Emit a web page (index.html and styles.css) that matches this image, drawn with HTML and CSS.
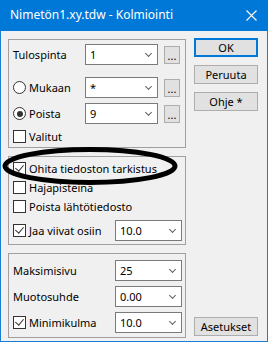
FILE: index.html
```html
<!DOCTYPE html>
<html lang="fi">
<head>
    <meta charset="UTF-8">
    <title>Kolmiointi</title>
    <link rel="stylesheet" href="styles.css">
</head>
<body>
    <div class="window">
        <div class="titlebar">
            <span class="title">Nimetön1.xy.tdw - Kolmiointi</span>
            <svg class="close" width="11" height="11" viewBox="0 0 11 11">
                <path d="M0.5 0.5 L10.5 10.5 M10.5 0.5 L0.5 10.5" stroke="#fff" stroke-width="1.1" fill="none"/>
            </svg>
        </div>

        <div class="client">
            <div class="groups">
                <!-- Tulospinta / lähde -->
                <div class="group g1">
                    <div class="row first">
                        <span class="lbl">Tulospinta</span>
                        <div class="combo">1<i class="chev"></i></div>
                        <button class="dots">...</button>
                    </div>
                    <div class="row gap12">
                        <span class="lbl"><span class="radio"></span>Mukaan</span>
                        <div class="combo">*<i class="chev"></i></div>
                        <button class="dots">...</button>
                    </div>
                    <div class="row">
                        <span class="lbl"><span class="radio on"></span>Poista</span>
                        <div class="combo">9<i class="chev"></i></div>
                        <button class="dots">...</button>
                    </div>
                    <div class="check-row">
                        <span class="check"></span>Valitut
                    </div>
                </div>

                <!-- Tiedostot -->
                <div class="group g2">
                    <div class="check-row first"><span class="check on"></span>Ohita tiedoston tarkistus</div>
                    <div class="check-row"><span class="check"></span>Hajapisteinä</div>
                    <div class="check-row"><span class="check"></span>Poista lähtötiedosto</div>
                    <div class="row wide last">
                        <span class="lbl"><span class="check on"></span>Jaa viivat osiin</span>
                        <div class="combo">10.0<i class="chev"></i></div>
                    </div>
                </div>

                <!-- Kolmiot -->
                <div class="group g3">
                    <div class="row wide first">
                        <span class="lbl">Maksimisivu</span>
                        <div class="combo">25<i class="chev"></i></div>
                    </div>
                    <div class="row wide">
                        <span class="lbl">Muotosuhde</span>
                        <div class="combo">0.00<i class="chev"></i></div>
                    </div>
                    <div class="row wide">
                        <span class="lbl"><span class="check on"></span>Minimikulma</span>
                        <div class="combo">10.0<i class="chev"></i></div>
                    </div>
                </div>
            </div>

            <div class="buttons">
                <button class="btn default">OK</button>
                <button class="btn">Peruuta</button>
                <button class="btn">Ohje *</button>
                <button class="btn bottom">Asetukset</button>
            </div>

            <!-- käsin piirretty korostus -->
            <svg class="mark" width="190" height="50" viewBox="0 0 190 50">
                <ellipse cx="88" cy="24" rx="85" ry="16.5" fill="none" stroke="#000" stroke-width="5"/>
            </svg>
        </div>
    </div>
</body>
</html>
```

FILE: styles.css
```css
body {
    margin: 0;
    font-family: 'Noto Sans', 'Open Sans', sans-serif;
    font-size: 11px;
    color: #000;
}

.window {
    width: 268px;
    height: 342px;
    box-sizing: border-box;
    border: 1px solid #1a7fd4;
    border-top: none;
    background-color: #f0f0f0;
    display: flex;
    flex-direction: column;
}

.titlebar {
    height: 31px;
    margin: 0 -1px;
    background-color: #0078d7;
    color: #fff;
    display: flex;
    align-items: center;
    padding: 0 11px 0 10px;
    flex-shrink: 0;
}

.title {
    flex: 1;
    font-size: 12px;
    line-height: 14px;
    margin-top: -1px;
}

.close {
    display: block;
    margin-top: -1px;
}

.client {
    flex: 1;
    display: flex;
    padding: 8px 0 3px 7px;
    position: relative;
}

.groups {
    width: 178px;
    display: flex;
    flex-direction: column;
    gap: 8px;
}

.group {
    box-sizing: border-box;
    border: 1px solid #a0a0a0;
    padding: 0 3px 0 4px;
    display: flex;
    flex-direction: column;
}

.g1 { height: 109px; }
.g2 { height: 89px; }
.g3 { height: 85px; }

.row {
    display: flex;
    align-items: center;
    height: 21px;
    margin-top: 5px;
}

.row.first { margin-top: 4px; }
.row.gap12 { margin-top: 12px; }
.g3 .row.first { margin-top: 6px; }

.lbl {
    width: 72px;
    display: flex;
    align-items: center;
    white-space: nowrap;
}

.row.wide .lbl { width: 102px; }

.combo {
    box-sizing: border-box;
    width: 73px;
    height: 21px;
    border: 1px solid #7a7a7a;
    background-color: #fff;
    padding-left: 4px;
    line-height: 19px;
    position: relative;
}

.row.wide .combo { width: 67px; }

.chev {
    position: absolute;
    right: 6px;
    top: 6px;
    width: 4px;
    height: 4px;
    border-right: 1px solid #606060;
    border-bottom: 1px solid #606060;
    transform: rotate(45deg);
}

.dots {
    box-sizing: border-box;
    width: 16px;
    height: 18px;
    margin-left: 6px;
    padding: 0;
    border: 1px solid #adadad;
    background-color: #e1e1e1;
    font-family: inherit;
    font-size: 11px;
    line-height: 18px;
    color: #000;
}

.check-row {
    display: flex;
    align-items: center;
    height: 13px;
    margin-top: 6px;
    white-space: nowrap;
}

.g2 .check-row.first { margin-top: 5px; }
.g2 .row.last { margin-top: 7px; }

.check, .radio {
    box-sizing: border-box;
    width: 13px;
    height: 13px;
    border: 1px solid #333;
    background-color: #fff;
    margin-right: 3px;
    flex-shrink: 0;
    position: relative;
}

.check.on::after {
    content: "";
    position: absolute;
    left: 3px;
    top: 0px;
    width: 4px;
    height: 7px;
    border-right: 1px solid #333;
    border-bottom: 1px solid #333;
    transform: rotate(40deg);
}

.radio { border-radius: 50%; }

.radio.on::after {
    content: "";
    position: absolute;
    left: 2.5px;
    top: 2.5px;
    width: 6px;
    height: 6px;
    border-radius: 50%;
    background-color: #333;
}

.buttons {
    margin-left: 8px;
    margin-top: -1px;
    display: flex;
    flex-direction: column;
}

.btn {
    box-sizing: border-box;
    width: 64px;
    height: 19px;
    padding: 0;
    border: 1px solid #adadad;
    background-color: #e1e1e1;
    font-family: inherit;
    font-size: 11px;
    color: #000;
    margin-top: 8px;
}

.btn.default {
    margin-top: 0;
    border: 2px solid #0078d7;
}

.btn.bottom { margin-top: auto; margin-bottom: 2px; }

.mark {
    position: absolute;
    left: 1px;
    top: 111px;
}
```
